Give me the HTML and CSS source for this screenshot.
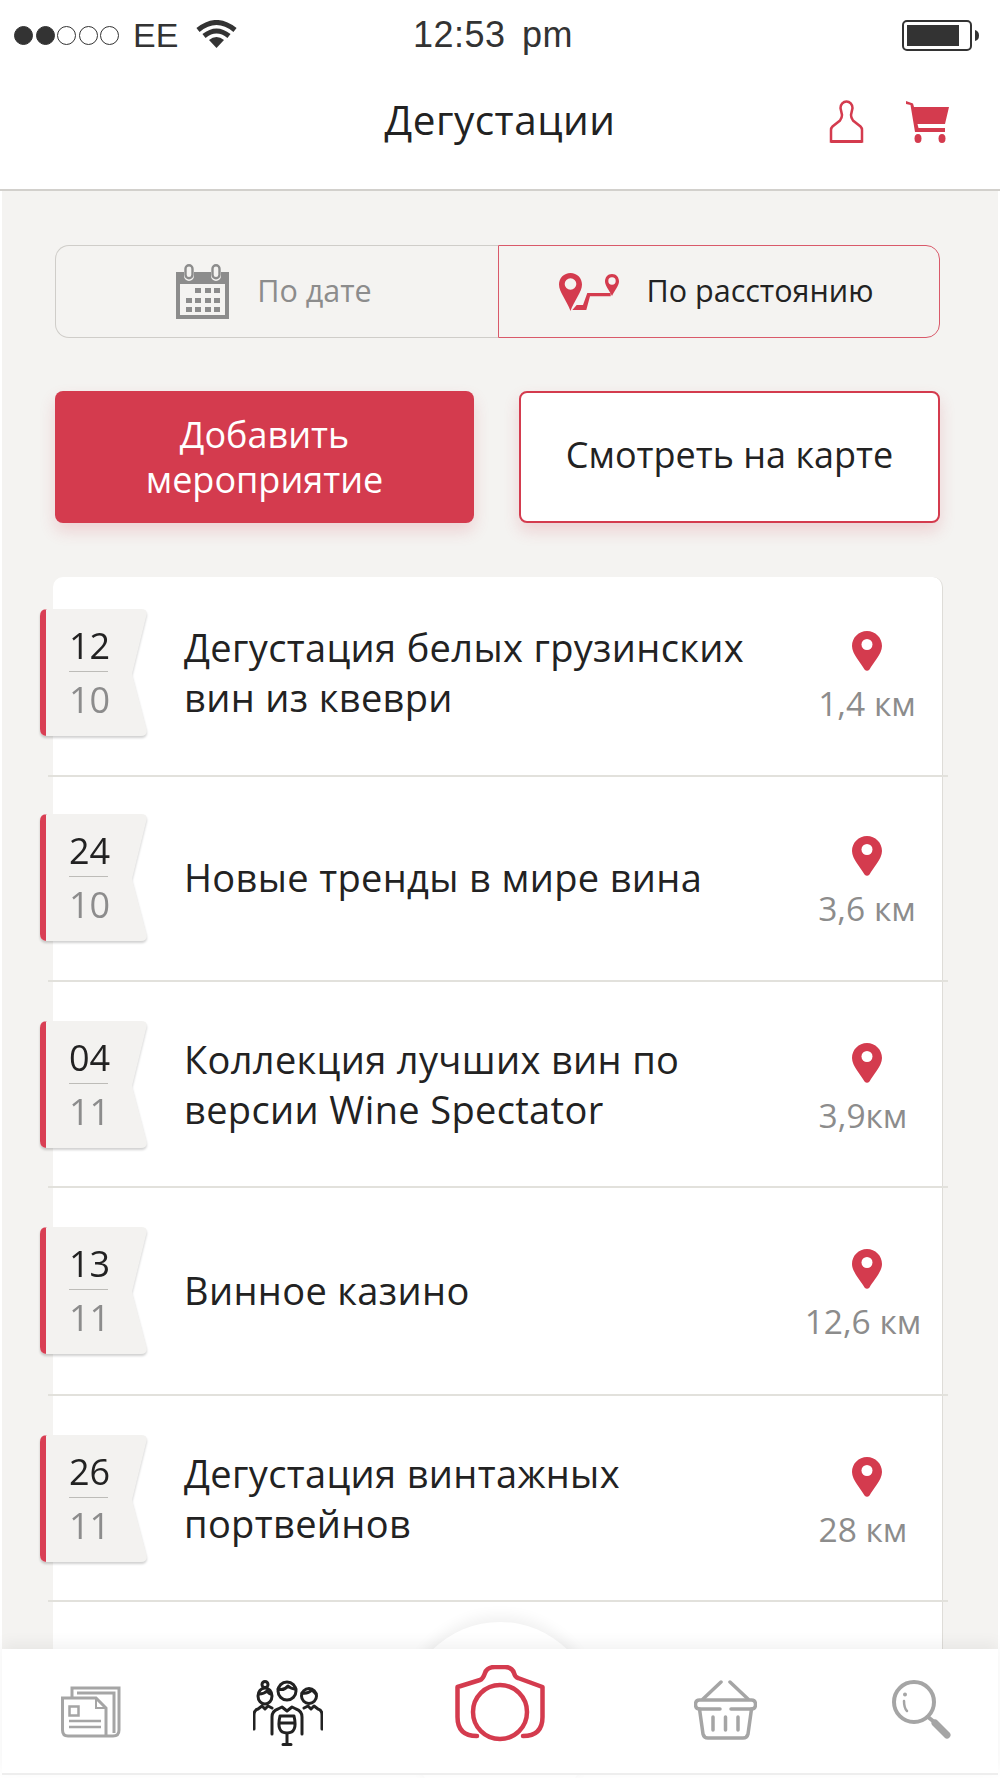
FILE: index.html
```html
<!DOCTYPE html>
<html lang="ru">
<head>
  <meta charset="UTF-8">
  <meta name="viewport" content="width=device-width, initial-scale=1.0">
  <title>Дегустации</title>
  <link rel="stylesheet" href="styles.css">
</head>
<body>
  <svg class="defs" width="0" height="0">
    <symbol id="ribbon" viewBox="0 0 107 127">
      <path d="M7 0H101Q108 0 106.500 6L92 65L106.500 120Q108 127 101 127H7Q0 127 0 120V7Q0 0 7 0Z" fill="#f3f2f0"/>
      <path d="M7 0H6V127H7Q0 127 0 120V7Q0 0 7 0Z" fill="#d93f54"/>
    </symbol>
    <symbol id="pin" viewBox="0 0 30 40">
      <path d="M15 0C6.700 0 0 6.700 0 15C0 23 9 32 12.500 38.500Q15 41 17.500 38.500C21 32 30 23 30 15C30 6.700 23.300 0 15 0Z" fill="#d43b4e"/>
      <circle cx="15" cy="13.500" r="5.500" fill="#fff"/>
    </symbol>
  </svg>

  <div class="status">
    <div class="status-left">
      <div class="dots">
        <span class="dot on"></span><span class="dot on"></span><span class="dot"></span><span class="dot"></span><span class="dot"></span>
      </div>
      <span class="carrier">EE</span>
      <svg class="wifi" width="41" height="28" viewBox="0 0 41 28">
        <path d="M2 10Q20.500 -5 39 10" fill="none" stroke="#333" stroke-width="5"/>
        <path d="M8 16Q20.500 6 33 16" fill="none" stroke="#333" stroke-width="5"/>
        <path d="M13 20Q20.500 14 28 20L20.500 28Z" fill="#333"/>
      </svg>
    </div>
    <span class="time">12:53 pm</span>
    <svg class="battery" width="78" height="31" viewBox="0 0 78 31">
      <rect x="1" y="1" width="68" height="29" rx="4" fill="none" stroke="#333" stroke-width="2"/>
      <rect x="5" y="5" width="52" height="21" fill="#333"/>
      <path d="M73 10Q77 11 77 15.500Q77 20 73 21Z" fill="#333"/>
    </svg>
  </div>

  <header class="topbar">
    <h1 class="page-title">Дегустации</h1>
    <div class="top-icons">
      <svg width="35" height="43" viewBox="0 0 35 43">
        <path d="M2 41.500V30Q2 28 3.500 26.500L11 20.500Q13 18 13 15L11.500 8A6 6.500 0 0 1 23.500 8L22 15Q22 18 24 20.500L31.500 26.500Q33 28 33 30V41.500Z" fill="none" stroke="#d43b4e" stroke-width="2.500"/>
        <path d="M2 41.500H33" stroke="#d43b4e" stroke-width="3"/>
      </svg>
      <svg width="43" height="43" viewBox="0 0 43 43">
        <path d="M0 1L7 3.500L8 7H43L39 24H11.500L12.500 28H39V32H9L4.500 5L0 4Z" fill="#d43b4e"/>
        <ellipse cx="12" cy="38.500" rx="3.500" ry="4.500" fill="#d43b4e"/>
        <ellipse cx="36" cy="38.500" rx="3.500" ry="4.500" fill="#d43b4e"/>
      </svg>
    </div>
  </header>

  <main class="content">
    <div class="sort">
      <div class="sort-item">
        <svg width="53" height="55" viewBox="0 0 53 55">
          <path d="M0 8H8V12A5 5 0 0 0 18 12V8H35V12A5 5 0 0 0 45 12V8H53V55H0ZM4 20V51H49V20Z" fill="#8c8c8c" fill-rule="evenodd"/>
          <rect x="9.500" y="1.200" width="7" height="13" rx="3.500" fill="none" stroke="#8c8c8c" stroke-width="2.400"/>
          <rect x="36.500" y="1.200" width="7" height="13" rx="3.500" fill="none" stroke="#8c8c8c" stroke-width="2.400"/>
          <path d="M19 24h6v5h-6zM29 24h6v5h-6zM38 24h6v5h-6zM10 34h6v5h-6zM19 34h6v5h-6zM29 34h6v5h-6zM38 34h6v5h-6zM10 43h6v5h-6zM19 43h6v5h-6zM29 43h6v5h-6zM38 43h6v5h-6z" fill="#8c8c8c"/>
        </svg>
        <span class="sort-label">По дате</span>
      </div>
      <div class="sort-item active">
        <svg width="60" height="38" viewBox="0 0 60 38">
          <path d="M11.500 0C5 0 0 5 0 11.500C0 19 8 28 11.500 38C15 28 23 19 23 11.500C23 5 18 0 11.500 0Z" fill="#d43b4e"/>
          <circle cx="11.500" cy="11" r="5.800" fill="#f4f3f1"/>
          <path d="M53 1C48.500 1 46 4.500 46 8.500C46 12.500 50 17 53 23C56 17 60 12.500 60 8.500C60 4.500 57.500 1 53 1Z" fill="#d43b4e"/>
          <circle cx="53" cy="8" r="3.700" fill="#f4f3f1"/>
          <path d="M13.300 37L17.700 32H24L28.300 20H51.700V23.300H31L27.300 37Z" fill="#d43b4e"/>
        </svg>
        <span class="sort-label">По расстоянию</span>
      </div>
    </div>

    <div class="actions">
      <div class="btn btn-red">Добавить<br>мероприятие</div>
      <div class="btn btn-white">Смотреть на карте</div>
    </div>

    <ul class="events">
      <li class="event">
        <div class="date">
          <svg class="date-bg"><use href="#ribbon"/></svg>
          <span class="day">12</span><span class="month">10</span>
        </div>
        <div class="event-title">Дегустация белых грузинских вин из квеври</div>
        <div class="dist">
          <svg width="30" height="40"><use href="#pin"/></svg>
          <span>1,4 км</span>
        </div>
      </li>
      <li class="event">
        <div class="date">
          <svg class="date-bg"><use href="#ribbon"/></svg>
          <span class="day">24</span><span class="month">10</span>
        </div>
        <div class="event-title">Новые тренды в мире вина</div>
        <div class="dist">
          <svg width="30" height="40"><use href="#pin"/></svg>
          <span>3,6 км</span>
        </div>
      </li>
      <li class="event">
        <div class="date">
          <svg class="date-bg"><use href="#ribbon"/></svg>
          <span class="day">04</span><span class="month">11</span>
        </div>
        <div class="event-title">Коллекция лучших вин по версии Wine Spectator</div>
        <div class="dist">
          <svg width="30" height="40"><use href="#pin"/></svg>
          <span class="dist-off">3,9км</span>
        </div>
      </li>
      <li class="event">
        <div class="date">
          <svg class="date-bg"><use href="#ribbon"/></svg>
          <span class="day">13</span><span class="month">11</span>
        </div>
        <div class="event-title">Винное казино</div>
        <div class="dist">
          <svg width="30" height="40"><use href="#pin"/></svg>
          <span class="dist-off">12,6 км</span>
        </div>
      </li>
      <li class="event">
        <div class="date">
          <svg class="date-bg"><use href="#ribbon"/></svg>
          <span class="day">26</span><span class="month">11</span>
        </div>
        <div class="event-title">Дегустация винтажных портвейнов</div>
        <div class="dist">
          <svg width="30" height="40"><use href="#pin"/></svg>
          <span class="dist-off">28 км</span>
        </div>
      </li>
      <li class="event event-empty"></li>
    </ul>
  </main>

  <footer class="bottom">
    <div class="bump"></div>
    <nav class="tabbar">
      <svg class="tab-news" width="60" height="52" viewBox="0 0 60 52" fill="none" stroke="#a5a5a5" stroke-width="3">
        <path d="M11 12V2H58V44Q58 50 52 50H7Q1.500 50 1.500 44V12H35L45 22V50"/>
        <path d="M16 7H53V47"/>
        <path d="M35 12V22H45" stroke-width="2"/>
        <rect x="8.500" y="20.500" width="9" height="9" stroke-width="2.500"/>
        <path d="M8 35H40M8 41H40" stroke-width="2.500"/>
      </svg>
      <svg class="tab-people" width="70" height="66" viewBox="0 0 70 66" fill="none" stroke="#222" stroke-width="3" stroke-linecap="round" stroke-linejoin="round">
        <circle cx="34" cy="11" r="9"/>
        <path d="M25 9Q31 11 35 6Q38 9 43 9"/>
        <path d="M19 54V37Q19 31 25 29L29 27L34 31L39 27L43 29Q49 31 49 37V54"/>
        <ellipse cx="12" cy="16" rx="7" ry="8"/>
        <circle cx="12" cy="4.500" r="3"/>
        <path d="M6 14Q11 14 14 11Q16 14 18 14"/>
        <path d="M1 49V35Q1 30 5 29L9 26L12 29L15 26L19 28"/>
        <circle cx="56" cy="16" r="7.500"/>
        <path d="M49 13Q55 14 59 10Q62 13 63 14"/>
        <path d="M69 49V35Q69 30 65 29L61 26L58 29L55 26L51 28"/>
        <path d="M27 36H41Q45 53 34 53Q23 53 27 36ZM26 43H42M34 53V64M30 64.500H38"/>
      </svg>
      <svg class="tab-camera" width="90" height="78" viewBox="0 0 90 78" fill="none" stroke="#d43b4e" stroke-width="4.500" stroke-linecap="round" stroke-linejoin="round">
        <path d="M22 71Q2.500 71 2.500 52V22L25 15Q28 14 30 8Q32 2 40 2H50Q57 2 59 8Q60 12 63 13L87.500 22V52Q87.500 71 68 71"/>
        <circle cx="45" cy="47" r="27"/>
      </svg>
      <svg class="tab-basket" width="63" height="60" viewBox="0 0 63 60" fill="none" stroke="#a5a5a5" stroke-width="3.500" stroke-linecap="round" stroke-linejoin="round">
        <path d="M27 2L9 19M36 2L54 19"/>
        <path d="M26 29H5.500Q1.500 29 1.500 24.500Q1.500 20 5.500 20H57.500Q61.500 20 61.500 24.500Q61.500 29 57.500 29H37"/>
        <path d="M5.500 29L9 54Q10 58 14 58H49Q53 58 54 54L57.500 29"/>
        <path d="M19 37V50M31.500 37V50M44 37V50"/>
      </svg>
      <svg class="tab-search" width="60" height="60" viewBox="0 0 60 60" fill="none" stroke="#a5a5a5" stroke-width="4" stroke-linecap="round">
        <circle cx="22" cy="22" r="20"/>
        <path d="M36 37L41 41"/>
        <path d="M43 43L55 55" stroke-width="7"/>
        <path d="M12 21Q12 28 15 31" stroke-width="2.500"/>
        <circle cx="13" cy="14.500" r="1" stroke-width="2"/>
      </svg>
    </nav>
  </footer>
</body>
</html>
```

FILE: styles.css
```css
* {
  box-sizing: border-box;
}
html, body {
  margin: 0;
  padding: 0;
}
body {
  width: 1000px;
  height: 1778px;
  overflow: hidden;
  display: flex;
  flex-direction: column;
  background-color: #fff;
  color: #222;
  font-family: "Open Sans", "Noto Sans", sans-serif;
}
.defs {
  display: block;
  height: 0;
}

/* status bar */
.status {
  position: relative;
  display: flex;
  justify-content: space-between;
  align-items: center;
  height: 70px;
  padding: 0 20px 0 14px;
  color: #333;
  font-family: "Liberation Sans", Arial, sans-serif;
}
.status-left {
  display: flex;
  align-items: center;
}
.dots {
  display: flex;
  gap: 2.500px;
  margin-right: 14px;
}
.dot {
  width: 19px;
  height: 19px;
  border: 1.500px solid #333;
  border-radius: 50%;
}
.dot.on {
  background-color: #333;
}
.carrier {
  font-size: 34px;
  margin-right: 18px;
}
.wifi {
  margin-top: -3px;
}
.time {
  position: absolute;
  left: 413px;
  top: 14px;
  font-size: 36px;
  letter-spacing: 0.500px;
  word-spacing: 6px;
}

/* header */
.topbar {
  display: flex;
  justify-content: flex-end;
  align-items: center;
  position: relative;
  height: 121px;
  padding-right: 51px;
  border-bottom: 2px solid #d2d0cc;
  padding-bottom: 16px;
}
.page-title {
  position: absolute;
  left: 0;
  right: 0;
  top: 24px;
  margin: 0;
  text-align: center;
  font-size: 40.500px;
  font-weight: 400;
  line-height: 52px;
  letter-spacing: 0.500px;
}
.top-icons {
  display: flex;
  align-items: center;
  gap: 42px;
}

/* main part */
.content {
  flex: 1;
  min-height: 0;
  overflow: hidden;
  margin: 0 2px;
  padding: 54px 58px 0 53px;
  background-color: #f4f3f1;
}
.sort {
  display: flex;
  height: 93px;
}
.sort-item {
  flex: 0 0 443px;
  display: flex;
  justify-content: center;
  align-items: center;
  gap: 28px;
  padding-right: 6px;
  border: 1px solid #cfcdc9;
  border-right: none;
  border-radius: 14px 0 0 14px;
  font-size: 30.500px;
  color: #8c8c8c;
}
.sort-label {
  padding-bottom: 3px;
}
.sort-item.active {
  flex: 1;
  border: 1px solid #d9596a;
  border-radius: 0 14px 14px 0;
  color: #222;
}

.actions {
  display: flex;
  gap: 45px;
  margin-top: 53px;
}
.btn {
  display: flex;
  justify-content: center;
  align-items: center;
  height: 132px;
  border-radius: 8px;
  font-size: 36px;
  line-height: 45px;
  text-align: center;
  box-shadow: 0 8px 16px rgba(212, 59, 78, 0.18);
}
.btn-red {
  flex: 0 0 419px;
  background-color: #d43b4e;
  color: #fff;
}
.btn-white {
  flex: 1;
  padding-bottom: 6px;
  background-color: #fff;
  border: 2px solid #d43b4e;
  color: #222;
}

/* list */
.events {
  list-style: none;
  margin: 54px -3px 0 -2px;
  padding: 0;
  background-color: #fff;
  border-right: 1px solid #dedcd8;
  border-radius: 10px 10px 0 0;
}
.event {
  display: flex;
  align-items: center;
  margin: 0 -6px 0 -5px;
  padding: 39px 11px 38px 0;
  border-bottom: 2px solid #e2e1dc;
}
.event:nth-child(1) {
  padding-top: 32px;
  padding-bottom: 39px;
}
.event:nth-child(2) {
  padding-top: 37px;
  padding-bottom: 39px;
}
.event:nth-child(4) {
  padding-bottom: 40px;
}
.event-empty {
  height: 200px;
  border-bottom: none;
}
.date {
  position: relative;
  flex: 0 0 107px;
  display: flex;
  flex-direction: column;
  align-items: center;
  width: 107px;
  height: 127px;
  margin-left: -8px;
  padding: 14px 10px 0 0;
  font-size: 36px;
  line-height: 46px;
  filter: drop-shadow(0 2px 1px rgba(0, 0, 0, 0.18));
}
.date-bg {
  position: absolute;
  left: 0;
  top: 0;
  width: 107px;
  height: 127px;
}
.day, .month {
  position: relative;
  width: 39px;
  text-align: center;
}
.day {
  border-bottom: 1px solid #bdbcb8;
  height: 49px;
  margin-bottom: 5px;
}
.month {
  color: #8c8c8c;
}
.event-title {
  flex: 1;
  margin-left: 37px;
  padding: 0 20px 2px 0;
  font-size: 38px;
  line-height: 50px;
  letter-spacing: 0.350px;
  color: #222;
}
.dist {
  flex: 0 0 140px;
  display: flex;
  flex-direction: column;
  align-items: center;
  gap: 12px;
  padding-top: 8px;
  font-size: 33.500px;
  line-height: 40px;
  color: #8c8c8c;
}
.dist-off {
  margin-right: 8px;
}

/* bottom tab bar */
.bottom {
  position: relative;
  flex: 0 0 129px;
  margin: 0 2px;
}
.bump {
  position: absolute;
  left: 402px;
  top: -27px;
  width: 192px;
  height: 192px;
  border-radius: 50%;
  background-color: #fff;
  box-shadow: 0 -6px 14px rgba(0, 0, 0, 0.06);
}
.tabbar {
  position: relative;
  height: 126px;
  background-color: #fff;
  border-bottom: 2px solid #eee;
  box-shadow: 0 -6px 14px rgba(0, 0, 0, 0.05);
}
.tabbar svg {
  position: absolute;
}
.tab-news { left: 59px; top: 37px; }
.tab-people { left: 251px; top: 31px; }
.tab-camera { left: 453px; top: 16px; }
.tab-basket { left: 692px; top: 31px; }
.tab-search { left: 890px; top: 31px; }
```
